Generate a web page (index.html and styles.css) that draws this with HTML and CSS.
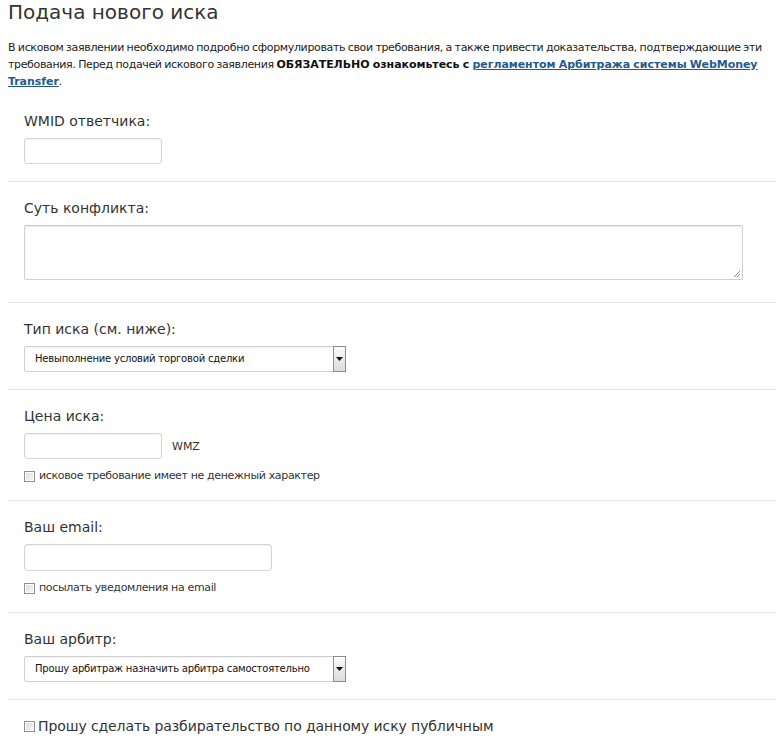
FILE: index.html
```html
<!DOCTYPE html>
<html lang="ru">
<head>
<meta charset="utf-8">
<title>Подача нового иска</title>
<link rel="stylesheet" href="styles.css">
</head>
<body>
<div class="page">
  <h1 class="title">Подача нового иска</h1>
  <p class="intro">В исковом заявлении необходимо подробно сформулировать свои требования, а также привести доказательства, подтверждающие эти требования. Перед подачей искового заявления <b>ОБЯЗАТЕЛЬНО ознакомьтесь с <a href="#" class="link">регламентом Арбитража системы WebMoney Transfer</a></b>.</p>

  <div class="field">
    <div class="label">WMID ответчика:</div>
    <div class="input w-short"></div>
  </div>

  <div class="field field-area">
    <div class="label">Суть конфликта:</div>
    <div class="textarea">
      <svg class="grip" width="9" height="9" viewBox="0 0 9 9"><path d="M8 2L2 8M8 5L5 8" stroke="#888" stroke-width="1"/></svg>
    </div>
  </div>

  <div class="field">
    <div class="label">Тип иска (см. ниже):</div>
    <div class="select">
      <span class="select-text">Невыполнение условий торговой сделки</span>
      <span class="select-btn"><svg width="7" height="4" viewBox="0 0 7 4"><path d="M0 0H7L3.5 4Z" fill="#111"/></svg></span>
    </div>
  </div>

  <div class="field field-check">
    <div class="label">Цена иска:</div>
    <div class="row">
      <div class="input w-short"></div>
      <span class="unit">WMZ</span>
    </div>
    <div class="check-row"><span class="checkbox"></span>исковое требование имеет не денежный характер</div>
  </div>

  <div class="field field-check field-email">
    <div class="label">Ваш email:</div>
    <div class="input w-mid"></div>
    <div class="check-row"><span class="checkbox"></span>посылать уведомления на email</div>
  </div>

  <div class="field">
    <div class="label">Ваш арбитр:</div>
    <div class="select">
      <span class="select-text">Прошу арбитраж назначить арбитра самостоятельно</span>
      <span class="select-btn"><svg width="7" height="4" viewBox="0 0 7 4"><path d="M0 0H7L3.5 4Z" fill="#111"/></svg></span>
    </div>
  </div>

  <div class="field field-last">
    <div class="check-row big"><span class="checkbox"></span>Прошу сделать разбирательство по данному иску публичным</div>
  </div>
</div>
</body>
</html>
```
FILE: styles.css
```css
html, body {
  margin: 0;
  padding: 0;
  background: #fff;
}
body {
  font-family: "DejaVu Sans", Verdana, sans-serif;
  color: #333;
}
.page {
  width: 768px;
  margin-left: 8px;
}
.title {
  margin: 0;
  font-size: 20px;
  line-height: 24px;
  font-weight: normal;
  color: #333;
}
.intro {
  margin: 15px 0 0 0;
  font-size: 11px;
  line-height: 17px;
  color: #222;
  letter-spacing: -0.35px;
  word-spacing: -0.5px;
}
.intro b {
  color: #111;
  letter-spacing: -0.05px;
}
.link {
  color: #1f5a8f;
  text-decoration: underline;
}
.field {
  padding: 17px 16px 17px 16px;
  border-bottom: 1px solid #e6e6e6;
}
.field:first-of-type {
  padding-top: 22px;
}
.label {
  font-size: 14px;
  line-height: 18px;
  color: #333;
  margin-bottom: 8px;
}
.input {
  height: 24px;
  border: 1px solid #d4d4d4;
  border-radius: 3px;
  box-shadow: inset 0 1px 2px rgba(0,0,0,0.06);
  background: #fff;
  box-sizing: content-box;
}
.w-short { width: 136px; }
.w-mid { width: 246px; }
.textarea {
  width: 717px;
  height: 53px;
  border: 1px solid #d0d0d0;
  border-top-color: #c8c8c8;
  border-radius: 2px;
  box-shadow: inset 0 1px 2px rgba(0,0,0,0.08);
  display: flex;
  justify-content: flex-end;
  align-items: flex-end;
  margin-bottom: 5px;
}
.grip {
  display: block;
  margin: 0 1px 1px 0;
}
.select {
  width: 320px;
  height: 24px;
  border: 1px solid #d0d0d0;
  border-radius: 2px;
  box-shadow: inset 0 1px 2px rgba(0,0,0,0.05);
  display: flex;
  align-items: stretch;
  background: #fff;
}
.select-text {
  flex: 1;
  font-size: 10px;
  line-height: 24px;
  padding-left: 10px;
  color: #111;
  letter-spacing: -0.2px;
}
.select-btn {
  width: 11px;
  border: 1px solid #8c8c8c;
  margin: -1px -1px -1px 0;
  background: linear-gradient(#fbfbfb, #dcdcdc);
  display: flex;
  align-items: center;
  justify-content: center;
}
.select-btn svg { display: block; }
.row {
  display: flex;
  align-items: center;
  gap: 10px;
}
.unit {
  font-size: 11px;
  color: #333;
}
.field-check {
  padding-bottom: 17px;
}
.field-email .input {
  height: 25px;
}
.field-email .check-row {
  margin-top: 10px;
}
.check-row {
  display: flex;
  align-items: center;
  font-size: 11px;
  line-height: 14px;
  color: #333;
  margin-top: 10px;
  letter-spacing: -0.35px;
}
.checkbox {
  width: 9px;
  height: 9px;
  border: 1px solid #8f8f8f;
  background: linear-gradient(135deg, #dcdcdc, #f8f8f8);
  box-shadow: inset 0 0 0 1px #fff;
  margin-right: 4px;
  flex: none;
}
.field-last {
  border-bottom: none;
  padding-top: 17px;
  padding-left: 16px;
}
.check-row.big {
  margin-top: 0;
  font-size: 14px;
  line-height: 18px;
  letter-spacing: -0.1px;
}
.check-row.big .checkbox {
  margin-right: 3px;
}
```
